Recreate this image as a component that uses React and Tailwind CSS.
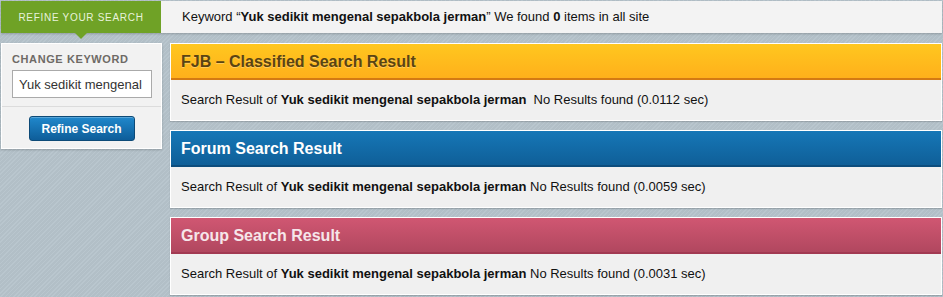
import React from "react";

const stripes =
  "bg-[#b5c2ca] bg-[repeating-linear-gradient(135deg,#b9c6ce_0px,#b9c6ce_1px,#b2bfc7_1px,#b2bfc7_3px)]";

function Panel({ title, headerCls, titleCls, time, extraSpace }) {
  return (
    <div className="border border-white shadow-[0_1px_1px_rgba(0,0,0,0.15)]">
      <div className={`h-[36px] flex items-center px-[10px] pt-[2px] ${headerCls}`}>
        <span className={`text-[16px] font-bold ${titleCls}`}>{title}</span>
      </div>
      <div className="h-[40px] bg-[#f0f0f0] flex items-center px-[10px] text-[13px] text-[#111]">
        <span>
          Search Result of <b>Yuk sedikit mengenal sepakbola jerman</b>
          {extraSpace ? "\u00a0 " : " "}No Results found ({time} sec)
        </span>
      </div>
    </div>
  );
}

export default function App() {
  return (
    <div
      className={`w-[943px] h-[297px] overflow-hidden ${stripes}`}
      style={{ fontFamily: '"Liberation Sans", Arial, sans-serif' }}
    >
      <div className="pt-[1px] pl-[1px] pr-[1px]">
        <div className="flex h-[32px] shadow-[0_1px_2px_rgba(0,0,0,0.2)]">
          <div className="relative w-[160px] bg-[#6fa226] flex items-center justify-center">
            <span className="text-[10px] tracking-[0.7px] text-[#e8f2dc]">REFINE YOUR SEARCH</span>
            <div className="absolute left-[74px] top-[32px] w-0 h-0 border-l-[6px] border-r-[6px] border-t-[6px] border-l-transparent border-r-transparent border-t-[#6fa226]" />
          </div>
          <div className="flex-1 bg-[#f3f3f3] flex items-center pl-[21px] text-[13px] text-[#111]">
            <span>
              Keyword “<b>Yuk sedikit mengenal sepakbola jerman</b>” We found <b>0</b> items in all site
            </span>
          </div>
        </div>
      </div>
      <div className="flex pt-[10px] pl-[1px] gap-[8px] pr-[1px]">
        <div className="w-[161px] self-start bg-[#f2f2f2] border border-white shadow-[0_1px_2px_rgba(0,0,0,0.2)]">
          <div className="px-[10px] pt-[9px] pb-[8px]">
            <div className="text-[11px] font-bold tracking-[0.6px] text-[#6e6a66] leading-[13px]">CHANGE KEYWORD</div>
            <input
              readOnly
              defaultValue="Yuk sedikit mengenal sepakbola jerman"
              className="mt-[4px] h-[28px] w-[140px] border border-[#aaaaaa] bg-white px-[6px] text-[13px] text-[#333] outline-none"
              style={{ fontFamily: '"Liberation Sans", Arial, sans-serif' }}
            />
          </div>
          <div className="border-t border-[#dcdcdc] pt-[9px] pb-[7px] flex justify-center">
            <div className="w-[106px] h-[25px] rounded-[3px] border border-[#0d4a77] bg-[linear-gradient(#2088cc,#0e5d99)] flex items-center justify-center shadow-[inset_0_1px_0_rgba(255,255,255,0.25)]">
              <span className="text-[12px] font-bold text-white">Refine Search</span>
            </div>
          </div>
        </div>
        <div className="flex-1 flex flex-col gap-[9px]">
          <Panel
            title="FJB – Classified Search Result"
            headerCls="bg-[linear-gradient(#ffc71f,#ffb01b)] border-b-2 border-[#d47a13]"
            titleCls="text-[#5a4413] [text-shadow:0_1px_0_rgba(255,255,255,0.3)]"
            time="0.0112"
            extraSpace
          />
          <Panel
            title="Forum Search Result"
            headerCls="bg-[linear-gradient(#1677b7,#0f5f98)] border-b-2 border-[#0c4d7d]"
            titleCls="text-white"
            time="0.0059"
          />
          <Panel
            title="Group Search Result"
            headerCls="bg-[linear-gradient(#d05772,#b1475f)] border-b-2 border-[#a23a52]"
            titleCls="text-[#f6e6ea]"
            time="0.0031"
          />
        </div>
      </div>
    </div>
  );
}
